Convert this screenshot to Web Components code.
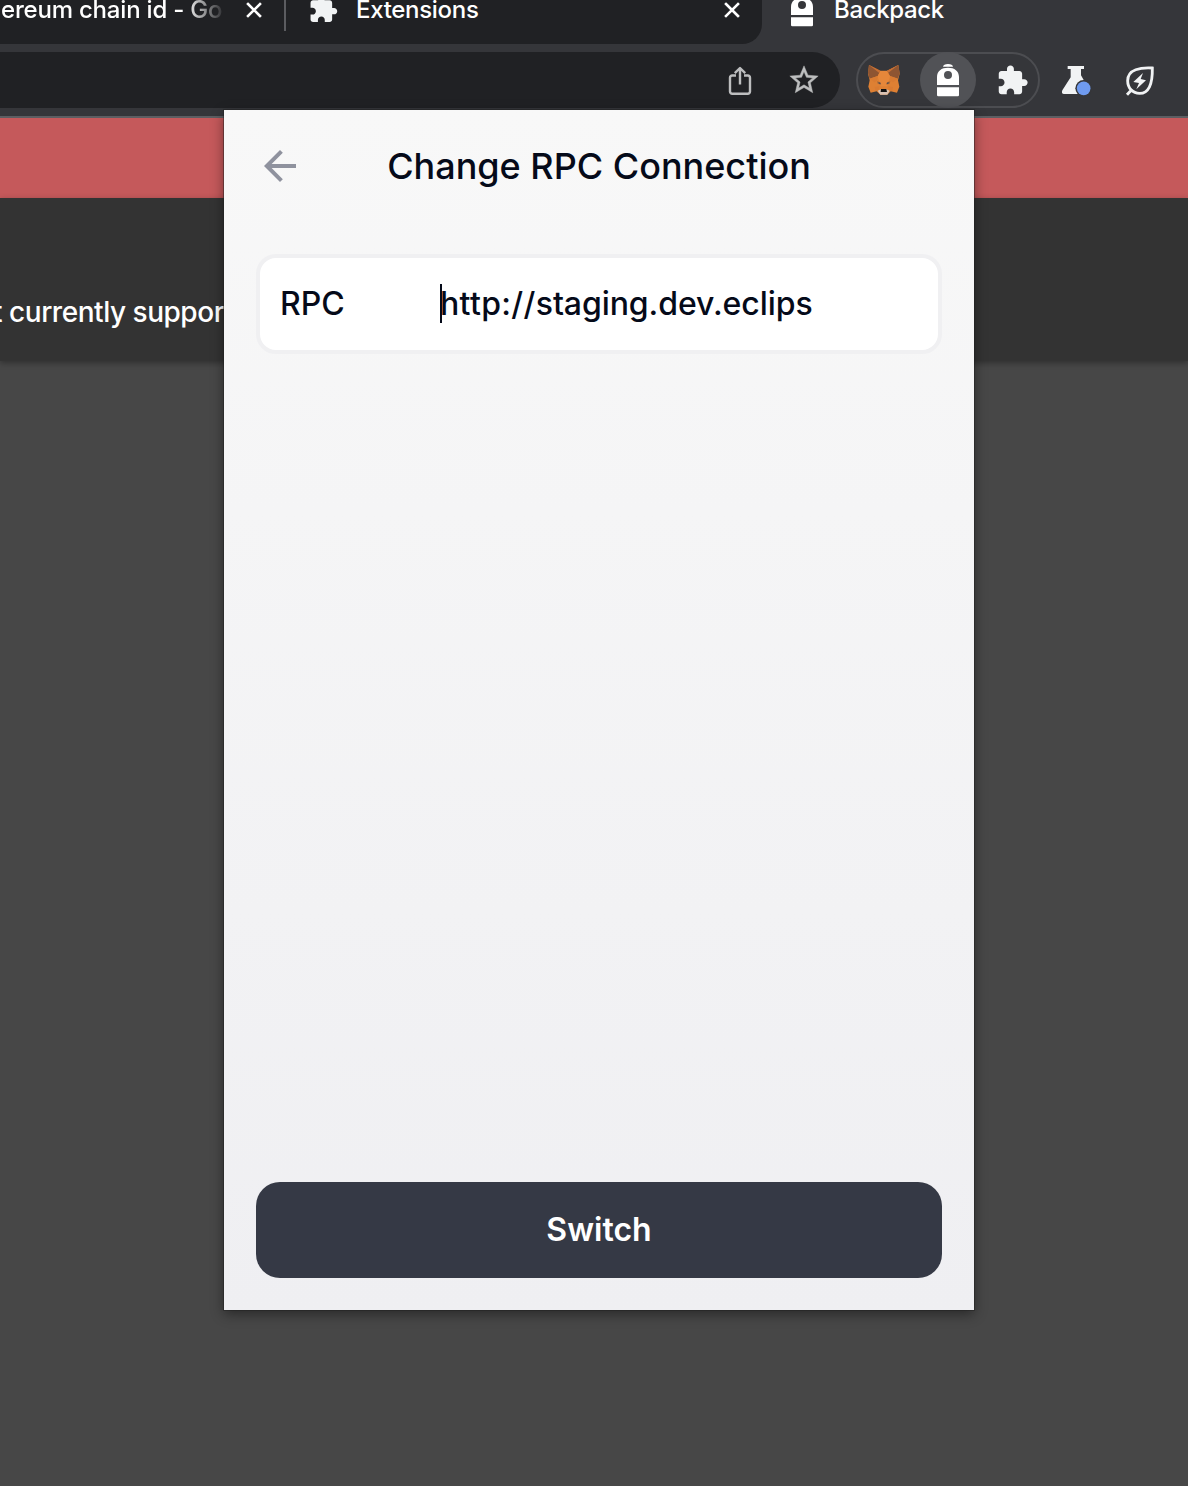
<!DOCTYPE html>
<html lang="en">
<head>
<meta charset="utf-8">
<title>Backpack</title>
<style>
html,body{margin:0;height:100%;overflow:hidden;background:#474747;font-family:Inter,"Liberation Sans",sans-serif}
</style>
</head>
<body>
<browser-window></browser-window>
<script>
const define = (name, html) => customElements.define(name, class extends HTMLElement {
  constructor() {
    super();
    this.attachShadow({ mode: 'open' }).innerHTML = '<style>*{box-sizing:border-box}svg{display:block}</style>' + html;
  }
});

define('icon-puzzle', `<style>:host{display:block;flex:none;width:33px;height:33px}svg{width:100%;height:100%}</style>
<svg viewBox="0 0 24 24" fill="#f1f3f4"><path d="M20.5 11H19V7c0-1.1-.9-2-2-2h-4V3.5C13 2.12 11.88 1 10.5 1S8 2.12 8 3.5V5H4c-1.1 0-1.99.9-1.99 2v3.8H3.5c1.49 0 2.7 1.21 2.7 2.7s-1.21 2.7-2.7 2.7H2V20c0 1.1.9 2 2 2h3.8v-1.5c0-1.49 1.21-2.7 2.7-2.7s2.7 1.21 2.7 2.7V22H17c1.1 0 2-.9 2-2v-4h1.5c1.38 0 2.5-1.12 2.5-2.5S21.88 11 20.5 11z"/></svg>`);

define('icon-backpack', `<style>:host{display:block;flex:none}</style>
<svg width="24" height="34" viewBox="0 0 24 34" fill="#fff"><path d="M7 3.7C7.3 2 9 1 12 1s4.700 1 5 2.700z"/><path fill-rule="evenodd" d="M1 22V14C1 8 5.500 4.700 12 4.700S23 8 23 14v8zM12 8a4 4 0 1 0 0 8 4 4 0 0 0 0-8z"/><path d="M1 24.300H23V32a1.300 1.300 0 0 1-1.300 1.300H2.300A1.300 1.300 0 0 1 1 32z"/></svg>`);

define('icon-close', `<style>:host{display:block;flex:none}</style>
<svg width="16" height="16" viewBox="0 0 16 16" stroke="#fff" stroke-width="2.600" stroke-linecap="square"><path d="M2 2l12 12M14 2L2 14"/></svg>`);

define('icon-share', `<style>:host{display:block;flex:none;margin-top:2px}</style>
<svg width="24" height="30" viewBox="0 0 24 30" fill="none" stroke="#bdbebf" stroke-width="2.400" stroke-linejoin="round"><path d="M8 9.500H4.200A2.200 2.200 0 0 0 2 11.700V25.500A2.200 2.200 0 0 0 4.200 27.700H19.800A2.200 2.200 0 0 0 22 25.500V11.700A2.200 2.200 0 0 0 19.800 9.500H16M12 18.500V2.500M6.800 7.200L12 2l5.200 5.200"/></svg>`);

define('icon-star', `<style>:host{display:block;flex:none}</style>
<svg width="34" height="34" viewBox="0 0 24 24" fill="#bdbebf" stroke="#bdbebf" stroke-width=".3"><path d="M22 9.240l-7.190-.62L12 2 9.190 8.630 2 9.240l5.460 4.730L5.820 21 12 17.270 18.180 21l-1.630-7.030L22 9.240zM12 15.400l-3.760 2.270 1-4.280-3.320-2.880 4.380-.38L12 6.100l1.710 4.040 4.380.38-3.320 2.880 1 4.280L12 15.400z"/></svg>`);

define('icon-fox', `<style>:host{display:block;flex:none}</style>
<svg width="34" height="32" viewBox="52 57 102 96">
<path fill="#de8033" d="M58 60L92 77H112L146 60 150 86 145 106 149 125 142 143 123 139 113 149H92L81 139 63 143 56 125 60 106 55 86z"/>
<path fill="#8e5532" d="M58 60L92 78 84 93 60 101 55 84zM146 60L112 78 121 93 145 101 150 84z"/>
<path fill="#c87034" d="M58 60L92 77 89 84zM146 60L112 77 115 84z"/>
<path fill="#e6873a" d="M92 78H112L121 94 112 124H93L84 94z"/>
<path fill="#d97b32" d="M60 101L84 93 82 107 75 112zM145 101L121 93 122 107 130 112zM75 126L90 124 86 139 77 137zM130 126L115 124 119 139 128 137z"/>
<path fill="#a86a3c" d="M82 109L92 112 94 119 84 116zM122 109L112 112 110 119 120 116z"/>
<path fill="#4c4a50" d="M86 112L92 113 93 117 88 116zM118 112L112 113 111 117 116 116z"/>
<path fill="#d7c1b3" d="M84 137L94 133H110L120 137 113 149H92z"/>
<path fill="#111" d="M94 132H110L112 141H93z"/>
</svg>`);

define('icon-flask', `<style>:host{display:block;flex:none}</style>
<svg width="32" height="32" viewBox="303 60 96 96"><path fill="#f1f3f4" d="M323 63H372V72H363V91L388 135Q390 147 380 147H312Q303 147 307 136L332 97V72H323z"/><circle cx="371" cy="130" r="25" fill="#35363a"/><circle cx="371" cy="130" r="20.500" fill="#6f9bf0"/></svg>`);

define('icon-leaf', `<style>:host{display:block;flex:none}</style>
<svg width="32" height="32" viewBox="0 0 96 96"><path fill="none" stroke="#f1f3f4" stroke-width="8.500" d="M82 9C48 7 8 12 8 47C8 69 23 85 44 85C70 85 83 60 82 9zM20 74L6 89"/><path fill="#f1f3f4" d="M54 24L25 51 42 54 34 73 63 46 47 42z"/></svg>`);

define('icon-back', `<style>:host{display:block;flex:none}</style>
<svg width="48" height="48" viewBox="0 0 24 24" fill="#8f929e"><path d="M20 11H7.830l5.590-5.590L12 4l-8 8 8 8 1.410-1.410L7.830 13H20v-2z"/></svg>`);

define('tab-strip', `<style>
:host{display:block;height:44px;overflow:hidden;background:#35363a;color:#fff;font-size:24px;font-weight:450}
.row{display:flex;height:68px;margin-top:-24px}
.inactive{display:flex;align-items:center;width:762px;background:#202124;border-radius:0 0 20px 0}
.t{white-space:nowrap;line-height:20px;letter-spacing:-.3px}
.first{width:222px;overflow:hidden;padding-left:1px;letter-spacing:-.2px;-webkit-mask-image:linear-gradient(90deg,#000 185px,transparent 226px)}
.c1{margin-left:24px}
.sep{width:2px;height:42px;margin-left:22px;background:#5b5c60}
.pz{width:30.500px;height:30.500px;margin-left:21.500px;margin-top:-1px}
.ext{margin-left:18px;width:368px}
.active{display:flex;align-items:center;padding-left:28px}
.active icon-backpack{margin-top:-1px}
.active .t{margin-left:20px;letter-spacing:-.35px}
</style>
<div class="row">
<div class="inactive"><span class="t first">ereum chain id - Go</span><icon-close class="c1"></icon-close><span class="sep"></span><icon-puzzle class="pz"></icon-puzzle><span class="t ext">Extensions</span><icon-close></icon-close></div>
<div class="active"><icon-backpack></icon-backpack><span class="t">Backpack</span></div>
</div>`);

define('tool-bar', `<style>
:host{display:flex;height:74px;padding-top:8px;background:#35363a;border-bottom:2px solid #5d5e62}
.omni{display:flex;align-items:center;justify-content:flex-end;gap:35px;width:840px;height:56px;padding-right:19px;background:#202124;border-radius:0 28px 28px 0}
.pill{display:flex;align-items:center;width:184px;height:56px;margin-left:16px;border:2px solid #4c4d51;border-radius:28px;padding-left:9px}
.on{display:flex;align-items:center;justify-content:center;flex:none;width:56px;height:56px;margin-left:19px;border-radius:50%;background:#515256}
.pz{margin-left:19.500px}
.fl{margin:13px 0 0 21px}.lf{margin:13px 0 0 32px}
</style>
<div class="omni"><icon-share></icon-share><icon-star></icon-star></div>
<div class="pill"><icon-fox></icon-fox><span class="on"><icon-backpack></icon-backpack></span><icon-puzzle class="pz"></icon-puzzle></div>
<icon-flask class="fl"></icon-flask><icon-leaf class="lf"></icon-leaf>`);

define('page-backdrop', `<style>
:host{display:block;flex:1;background:#474747}
.alert{height:80px;background:#c5595b}
.notice{height:163px;padding-top:96px;background:#333;box-shadow:0 2px 6px rgba(0,0,0,.35);color:#fff;font-size:28px;font-weight:450;line-height:36px;letter-spacing:-.47px}
.clip{display:flex;justify-content:flex-end;width:224px;overflow:hidden;white-space:nowrap}
</style>
<div class="alert"></div><div class="notice"><div class="clip">t currently suppor</div></div>`);

define('rpc-field', `<style>
:host{display:flex;align-items:center;height:100px;padding:0 16px 0 20px;border:4px solid #f0f0f2;border-radius:20px;background:#fff;font-size:32px;font-weight:500;line-height:40px}
label{width:160px}
.value{position:relative;width:374px;overflow:hidden;white-space:nowrap}
.caret{position:absolute;left:0;top:0;width:2px;height:39px;background:#050a19}
</style>
<label><slot></slot></label><div class="value"><slot name="value"></slot><i class="caret"></i></div>`);

define('wallet-popup', `<style>
:host{display:flex;flex-direction:column;width:750px;height:1200px;padding:32px;background:linear-gradient(#f8f8f8,#efeff2);color:#050a19;box-shadow:0 0 0 1px rgba(30,30,30,.45),0 4px 12px rgba(0,0,0,.45)}
header{display:flex;align-items:center;height:48px}
h1{flex:1;margin:0 48px 0 0;text-align:center;font-size:36px;font-weight:500;line-height:48px}
rpc-field{margin-top:64px}
.scheme{letter-spacing:.35px}.host{letter-spacing:-.08px}
button{margin-top:auto;width:100%;height:96px;border:0;border-radius:24px;background:#353945;color:#fff;font:600 32px/40px Inter,sans-serif}
</style>
<header><icon-back></icon-back><h1><span>Change RPC Connection</span></h1></header>
<rpc-field>RPC<span slot="value"><span class="scheme">http://</span><span class="host">staging.dev.eclips</span></span></rpc-field>
<button>Switch</button>`);

define('browser-window', `<style>
:host{display:flex;flex-direction:column;position:relative;width:1188px;height:1486px;overflow:hidden}
wallet-popup{position:absolute;left:224px;top:110px}
</style>
<tab-strip></tab-strip><tool-bar></tool-bar><page-backdrop></page-backdrop><wallet-popup></wallet-popup>`);
</script>
</body>
</html>
